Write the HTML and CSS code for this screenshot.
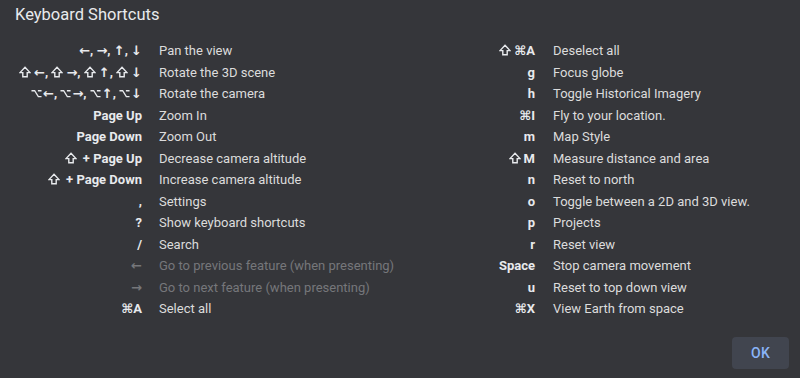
FILE: index.html
```html
<!DOCTYPE html>
<html lang="en">
<head>
<meta charset="UTF-8">
<title>Keyboard Shortcuts</title>
<link rel="stylesheet" href="styles.css">
</head>
<body>
  <!-- Iconos de teclas modificadoras -->
  <svg width="0" height="0" style="position:absolute">
    <symbol id="shift" viewBox="0 0 12 12"><path d="M6 1.2 L11 6.6 H8.2 V10.8 H3.8 V6.6 H1 Z" fill="none" stroke="currentColor" stroke-width="1.4" stroke-linejoin="miter"/></symbol>
    <symbol id="option" viewBox="0 0 12 12"><path d="M0.5 3 H4 L8 9.5 H11.5 M7.5 3 H11.5" fill="none" stroke="currentColor" stroke-width="1.4"/></symbol>
  </svg>

  <div class="dialog">
    <h1 class="title">Keyboard Shortcuts</h1>

    <div class="columns">
      <!-- Columna izquierda -->
      <div class="list left">
        <span class="key">←, →, ↑, ↓</span><span class="desc">Pan the view</span>
        <span class="key"><svg class="sym"><use href="#shift"/></svg>←, <svg class="sym"><use href="#shift"/></svg>→, <svg class="sym"><use href="#shift"/></svg>↑, <svg class="sym"><use href="#shift"/></svg>↓</span><span class="desc">Rotate the 3D scene</span>
        <span class="key"><svg class="sym opt"><use href="#option"/></svg>←, <svg class="sym opt"><use href="#option"/></svg>→, <svg class="sym opt"><use href="#option"/></svg>↑, <svg class="sym opt"><use href="#option"/></svg>↓</span><span class="desc">Rotate the camera</span>
        <span class="key">Page Up</span><span class="desc">Zoom In</span>
        <span class="key">Page Down</span><span class="desc">Zoom Out</span>
        <span class="key"><svg class="sym"><use href="#shift"/></svg> + Page Up</span><span class="desc">Decrease camera altitude</span>
        <span class="key"><svg class="sym"><use href="#shift"/></svg> + Page Down</span><span class="desc">Increase camera altitude</span>
        <span class="key">,</span><span class="desc">Settings</span>
        <span class="key">?</span><span class="desc">Show keyboard shortcuts</span>
        <span class="key">/</span><span class="desc">Search</span>
        <span class="key off">←</span><span class="desc off">Go to previous feature (when presenting)</span>
        <span class="key off">→</span><span class="desc off">Go to next feature (when presenting)</span>
        <span class="key">⌘A</span><span class="desc">Select all</span>
      </div>

      <!-- Columna derecha -->
      <div class="list right">
        <span class="key"><svg class="sym"><use href="#shift"/></svg>⌘A</span><span class="desc">Deselect all</span>
        <span class="key">g</span><span class="desc">Focus globe</span>
        <span class="key">h</span><span class="desc">Toggle Historical Imagery</span>
        <span class="key">⌘I</span><span class="desc">Fly to your location.</span>
        <span class="key">m</span><span class="desc">Map Style</span>
        <span class="key"><svg class="sym"><use href="#shift"/></svg>M</span><span class="desc">Measure distance and area</span>
        <span class="key">n</span><span class="desc">Reset to north</span>
        <span class="key">o</span><span class="desc">Toggle between a 2D and 3D view.</span>
        <span class="key">p</span><span class="desc">Projects</span>
        <span class="key">r</span><span class="desc">Reset view</span>
        <span class="key">Space</span><span class="desc">Stop camera movement</span>
        <span class="key">u</span><span class="desc">Reset to top down view</span>
        <span class="key">⌘X</span><span class="desc">View Earth from space</span>
      </div>
    </div>

    <div class="actions">
      <button class="ok">OK</button>
    </div>
  </div>
</body>
</html>
```

FILE: styles.css
```css
body {
    margin: 0;
    background-color: #35363a;
    font-family: Roboto, "Noto Sans", "DejaVu Sans", sans-serif;
    color: #e3e3e3;
}

.dialog {
    width: 800px;
    height: 378px;
    box-sizing: border-box;
    padding: 5px 0 0 0;
}

.title {
    margin: 0 0 0 15px;
    font-size: 16.5px;
    font-weight: 400;
    line-height: 20px;
    color: #e8eaed;
}

.columns {
    display: flex;
    margin-top: 15px;
}

/* Cada columna: tecla a la derecha, descripción a la izquierda */
.list {
    display: grid;
    grid-auto-rows: 21.5px;
    align-items: center;
    font-size: 13px;
}

.list.left {
    width: 394px;
    grid-template-columns: 142px 1fr;
    column-gap: 17px;
}

.list.right {
    grid-template-columns: 141px 1fr;
    column-gap: 18px;
}

.key {
    text-align: right;
    font-weight: 700;
    color: #e8eaed;
    white-space: nowrap;
}

/* Iconos de teclas modificadoras (⇧, ⌥) */
.sym {
    width: 12px;
    height: 12px;
    margin-right: 3px;
    vertical-align: -1px;
}

.sym.opt {
    width: 11px;
    height: 11px;
    margin-right: 1px;
}

.desc {
    color: #dcdcdc;
    white-space: nowrap;
}

.off {
    color: #76777a;
}

.actions {
    display: flex;
    justify-content: flex-end;
    padding: 17px 11px 0 0;
}

.ok {
    width: 57px;
    height: 32px;
    border: none;
    border-radius: 4px;
    background-color: #41454f;
    color: #8ab4f8;
    font-family: Roboto, sans-serif;
    font-size: 14px;
    font-weight: 500;
    letter-spacing: 0.3px;
}
```
